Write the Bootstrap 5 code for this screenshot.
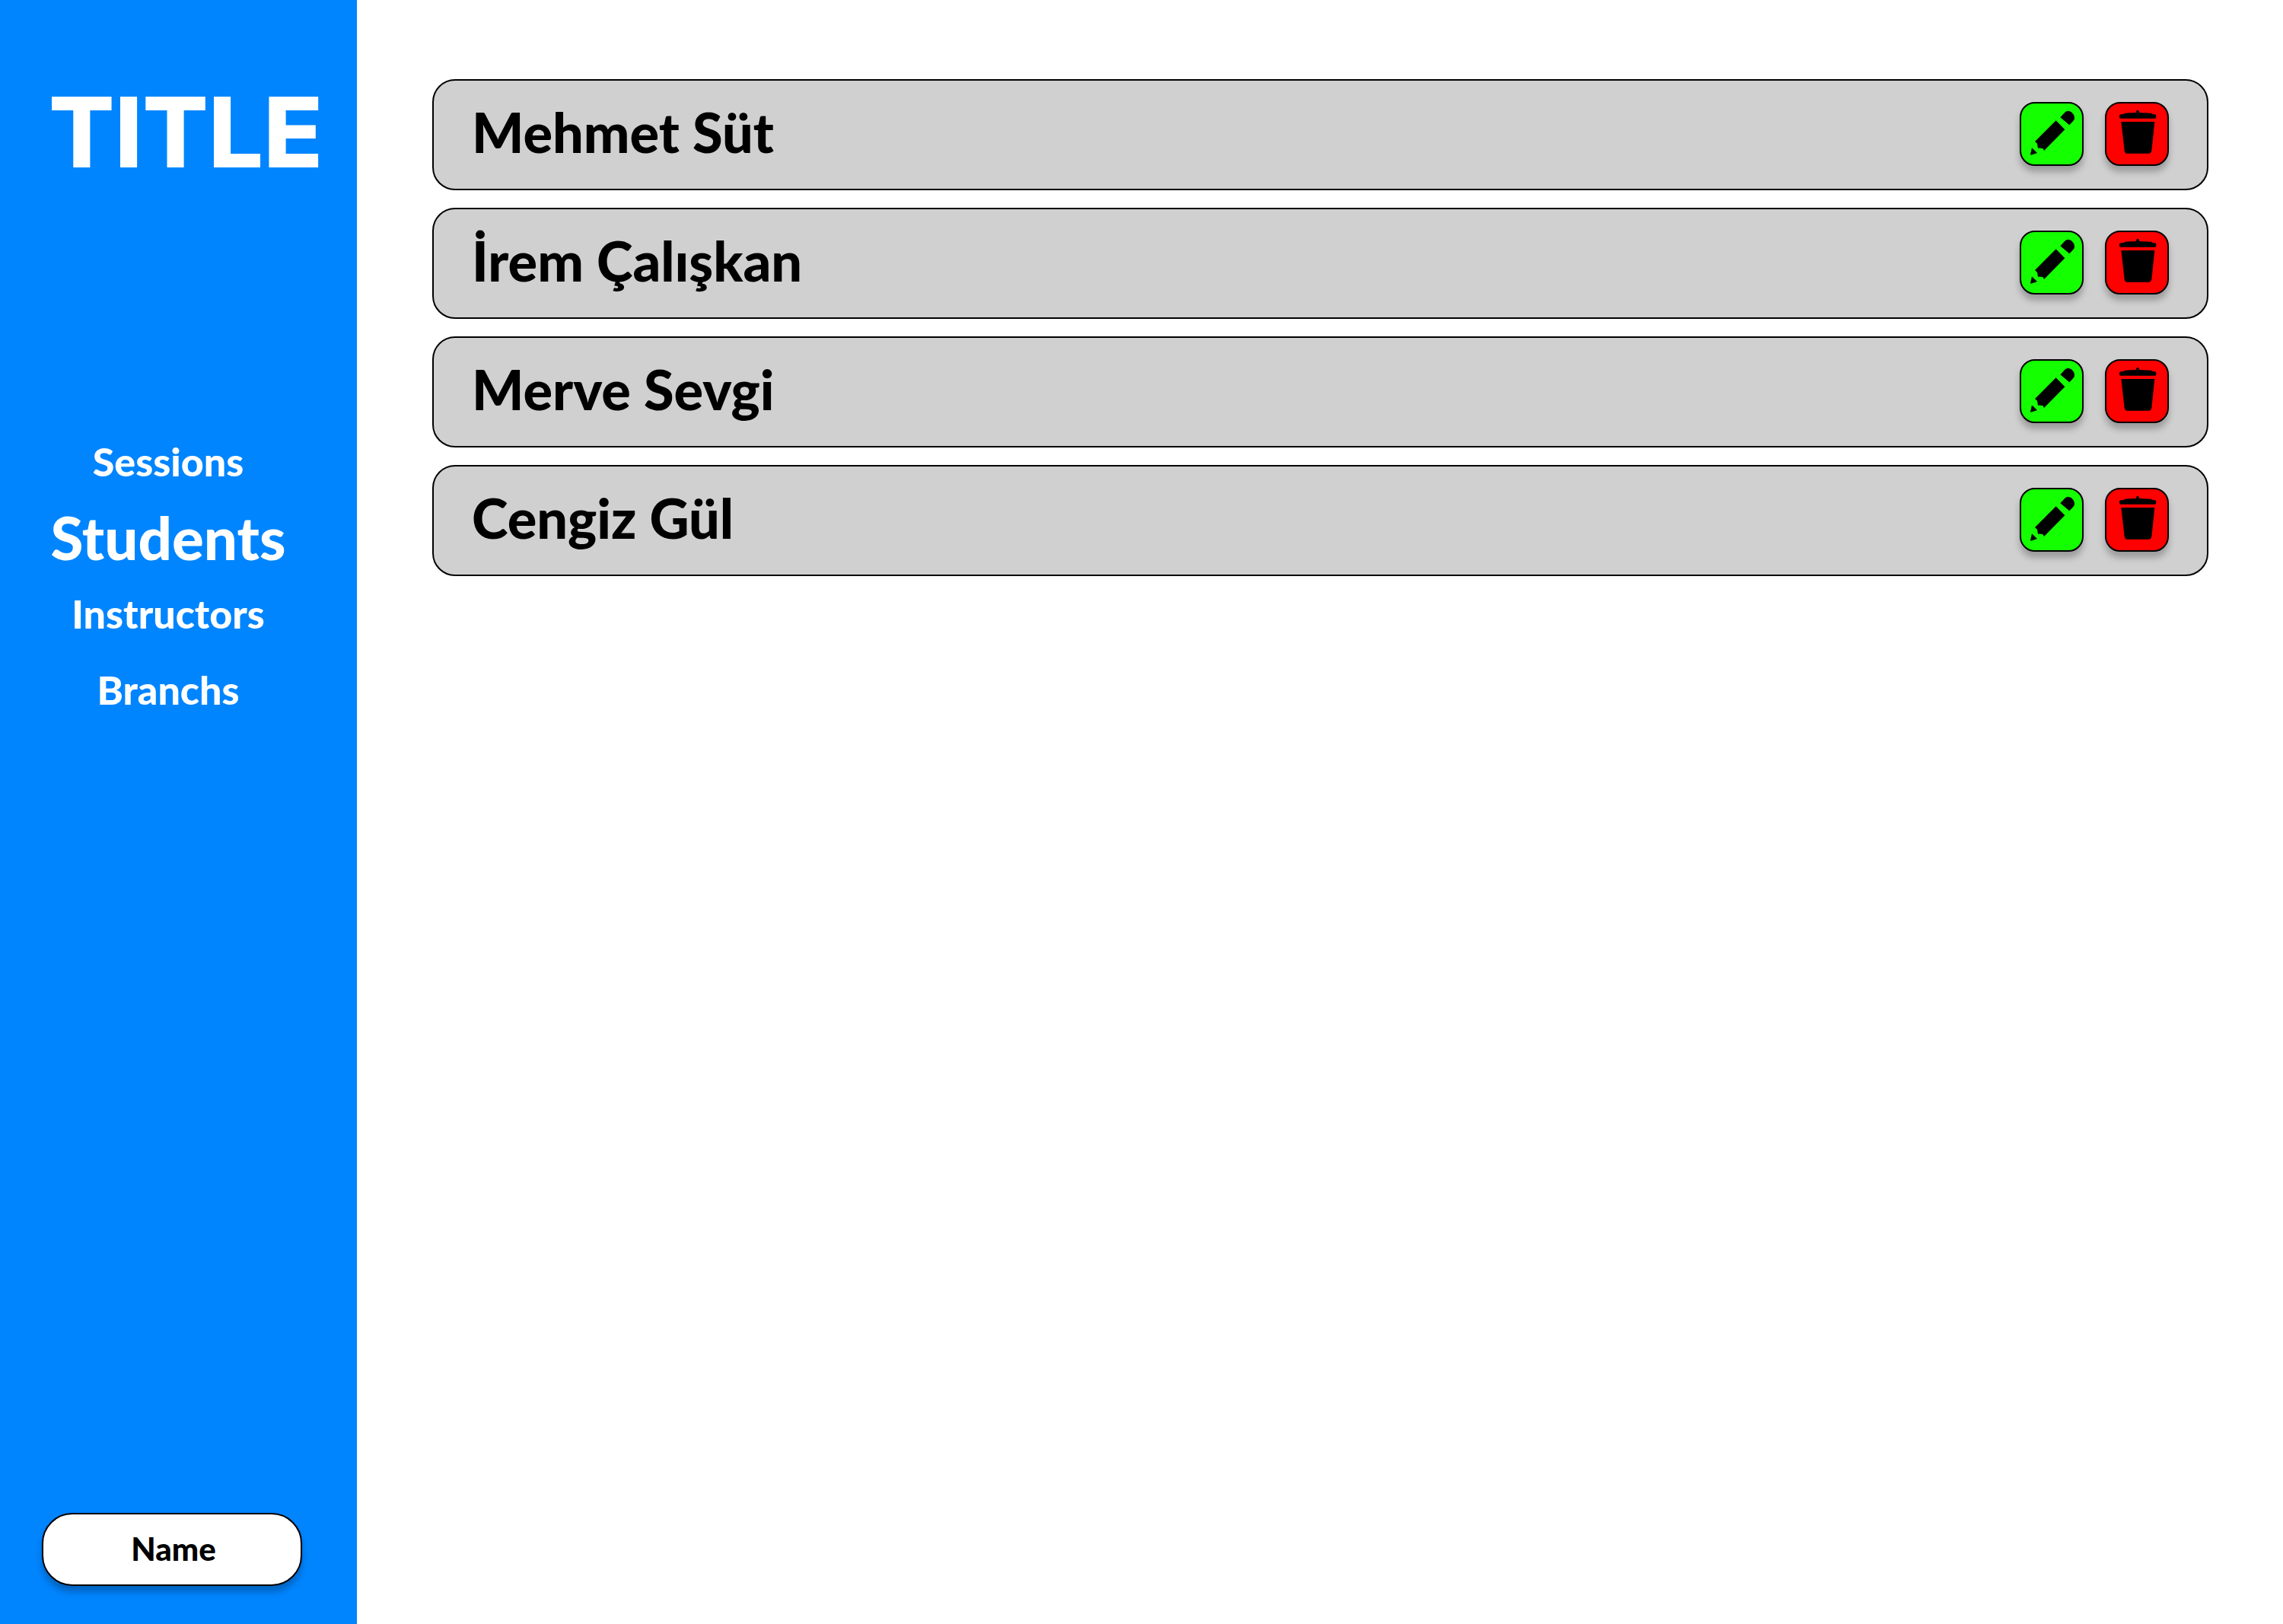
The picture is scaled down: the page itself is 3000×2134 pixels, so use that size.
<!DOCTYPE html>
<html lang="tr">
<head>
<meta charset="utf-8">
<meta name="viewport" content="width=device-width, initial-scale=1">
<title>Students</title>
<link href="https://cdn.jsdelivr.net/npm/bootstrap@5.3.0/dist/css/bootstrap.min.css" rel="stylesheet">
<style>
  body { font-family: Lato, "Open Sans", sans-serif; font-weight: 900; color: #000; background: #fff; }
  .side-panel { flex: 0 0 469px; background: #0085ff; padding: 94px 27px 50px 0; }
  .brand-title { font: 800 128px/160px Inter, sans-serif; margin: 0 0 0 64px; color: #fff; }
  .side-nav { margin-top: 302px; }
  .side-nav .nav-link { font-size: 52px; line-height: 100px; padding: 0; color: #fff; }
  .side-nav .nav-link.active { font-size: 78px; }
  .name-btn { width: 342px; height: 96px; margin-left: 55px; padding: 0 0 2px 4px; border: 2px solid #000; border-radius: 40px; background: #fff; color: #000; font-size: 42px; line-height: 60px; font-weight: 900; box-shadow: 0 8px 8px rgba(0, 0, 0, .25); }
  .main-panel { padding: 104px 98px 104px 99px; }
  .student-list { gap: 23px; }
  .student-item { height: 146px; padding: 0 50px 2px 50px; border: 2px solid #000; border-radius: 30px; background: #d0d0d0; }
  .student-name { font-size: 72px; line-height: 82px; font-weight: 900; margin: 0; padding-bottom: 6px; }
  .actions { gap: 28px; }
  .icon-btn { width: 84px; height: 84px; padding: 0; border: 2px solid #000; border-radius: 20px; box-shadow: 0 8px 8px rgba(0, 0, 0, .25); }
  .icon-btn svg { display: block; width: 100%; height: 100%; }
  .icon-edit, .icon-edit:hover { background: #14ff00; }
  .icon-delete, .icon-delete:hover { background: #f00; }
</style>
</head>
<body>
<svg class="d-none" aria-hidden="true">
  <symbol id="pencil" viewBox="6 6 240 240">
    <path d="M160 61 175 44Q180 36 190 35 198 35 204 40L213 50Q216 56 216 65 215 71 211 75L196 91Z"/>
    <path d="M143 73 178 109 96 192 92 184Q80 180 72 182L69 164 60 156Z"/>
    <path d="M48 181 69 201 45 209 42 207Z"/>
  </symbol>
  <symbol id="trash" viewBox="6 6 240 240">
    <path d="M57 55Q57 50 62 49L75 48Q76 44 81 44L123 42Q123 32 129 32 135 32 135 42L183 44Q187 45 187 48L196 49Q202 50 202 54V60Q202 65 197 65H62Q57 65 57 60Z"/>
    <path d="M64 78H196L184 192Q182 203 172 203H88Q78 203 77 192Z"/>
  </symbol>
</svg>
<div class="d-flex min-vh-100">
  <aside class="side-panel d-flex flex-column">
    <h1 class="brand-title">TITLE</h1>
    <nav class="side-nav nav flex-column text-center" aria-label="Main">
      <a class="nav-link" href="#sessions">Sessions</a>
      <a class="nav-link active" aria-current="page" href="#students">Students</a>
      <a class="nav-link" href="#instructors">Instructors</a>
      <a class="nav-link" href="#branchs">Branchs</a>
    </nav>
    <button type="button" class="name-btn btn mt-auto">Name</button>
  </aside>
  <main class="main-panel flex-grow-1">
    <ul class="student-list list-unstyled d-flex flex-column m-0">
      <li class="student-item d-flex align-items-center justify-content-between">
        <h2 class="student-name">Mehmet Süt</h2>
        <div class="actions d-flex">
          <button type="button" class="icon-btn icon-edit btn" aria-label="Edit"><svg><use href="#pencil"/></svg></button>
          <button type="button" class="icon-btn icon-delete btn" aria-label="Delete"><svg><use href="#trash"/></svg></button>
        </div>
      </li>
      <li class="student-item d-flex align-items-center justify-content-between">
        <h2 class="student-name">İrem Çalışkan</h2>
        <div class="actions d-flex">
          <button type="button" class="icon-btn icon-edit btn" aria-label="Edit"><svg><use href="#pencil"/></svg></button>
          <button type="button" class="icon-btn icon-delete btn" aria-label="Delete"><svg><use href="#trash"/></svg></button>
        </div>
      </li>
      <li class="student-item d-flex align-items-center justify-content-between">
        <h2 class="student-name">Merve Sevgi</h2>
        <div class="actions d-flex">
          <button type="button" class="icon-btn icon-edit btn" aria-label="Edit"><svg><use href="#pencil"/></svg></button>
          <button type="button" class="icon-btn icon-delete btn" aria-label="Delete"><svg><use href="#trash"/></svg></button>
        </div>
      </li>
      <li class="student-item d-flex align-items-center justify-content-between">
        <h2 class="student-name">Cengiz Gül</h2>
        <div class="actions d-flex">
          <button type="button" class="icon-btn icon-edit btn" aria-label="Edit"><svg><use href="#pencil"/></svg></button>
          <button type="button" class="icon-btn icon-delete btn" aria-label="Delete"><svg><use href="#trash"/></svg></button>
        </div>
      </li>
    </ul>
  </main>
</div>
<script src="https://cdn.jsdelivr.net/npm/bootstrap@5.3.0/dist/js/bootstrap.bundle.min.js"></script>
</body>
</html>
